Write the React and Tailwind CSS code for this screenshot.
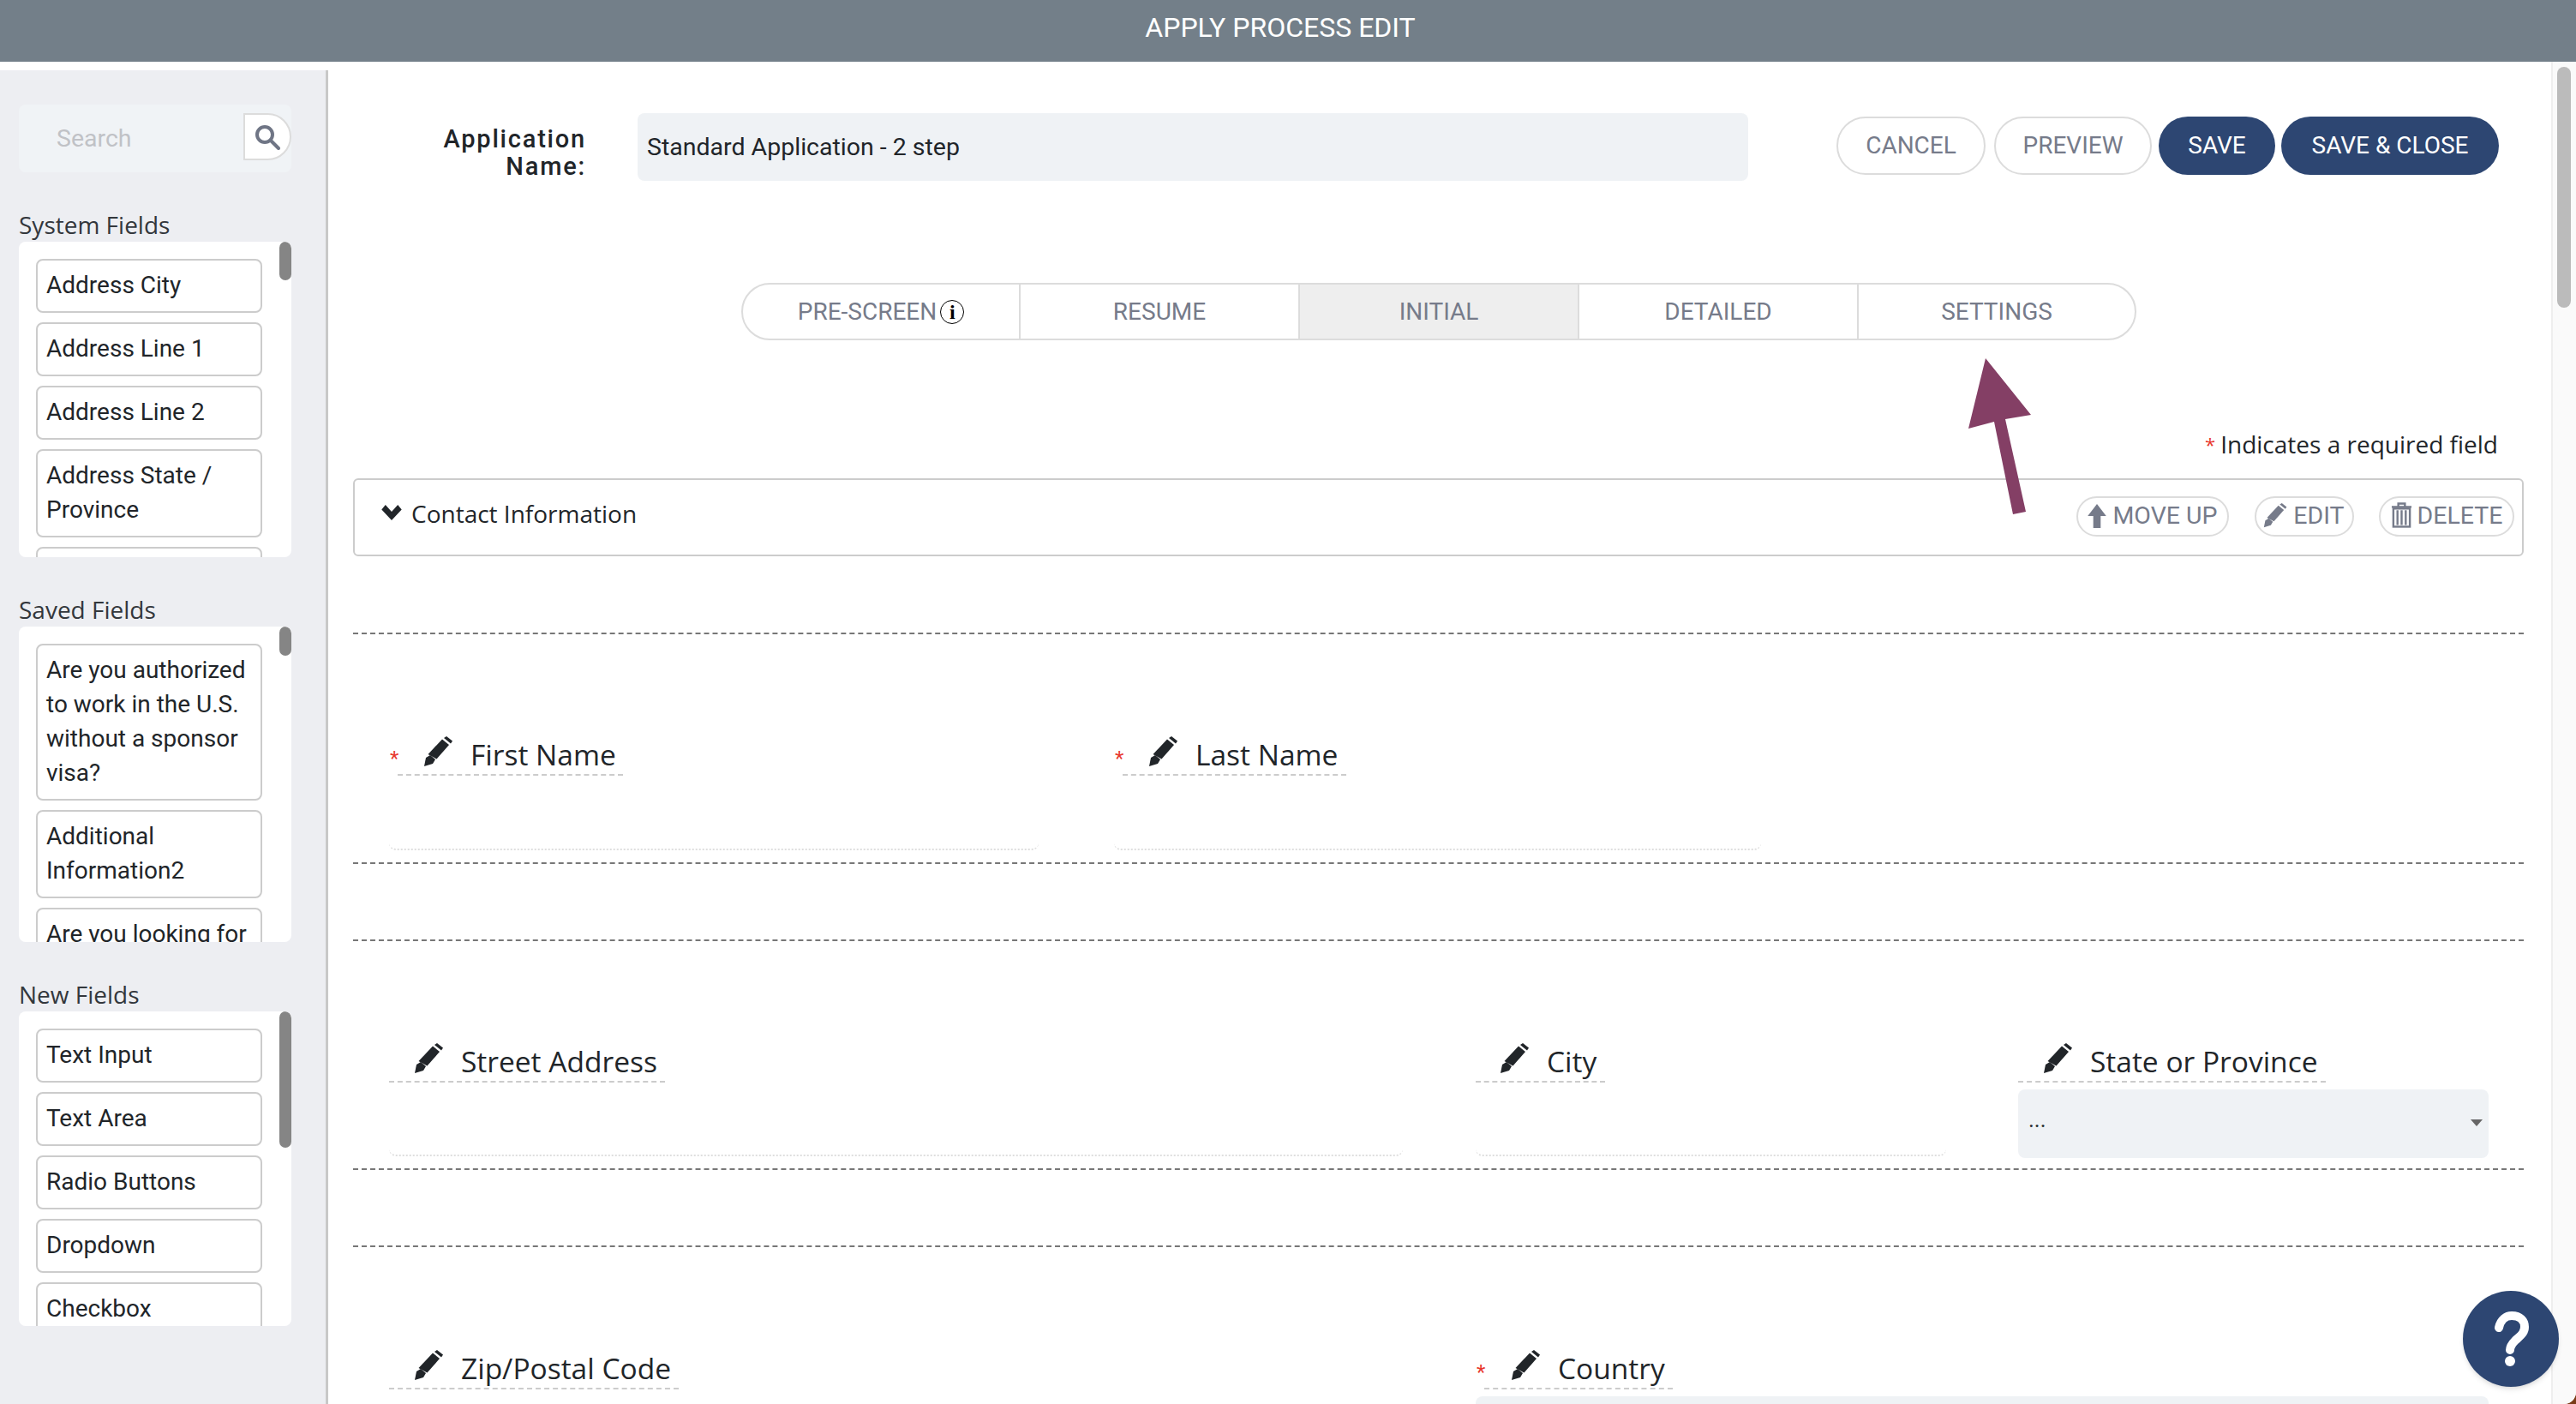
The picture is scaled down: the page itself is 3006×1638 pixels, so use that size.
const roboto = "font-['Roboto',sans-serif]"
const openSans = "font-['Open_Sans',sans-serif]"

function Pencil({ className, color = '#212529' }) {
  return (
    <svg viewBox="0 0 36 36" className={className} fill={color}>
      <path d="M1 35 L3 25 L8 22 L14 27 L11 32 Z" />
      <path d="M5.5 21 L22 3.5 L30 10 L15.5 26.5 Z" />
      <path d="M24 2 L27 0 L34 5.5 L32 8.5 Z" />
    </svg>
  )
}

function TabButton({ children, active, className = '', last }) {
  return (
    <div
      className={`flex items-center justify-center text-[28px] text-[#767b8a] ${
        active ? 'bg-[#eeeeee]' : ''
      } ${last ? '' : 'border-r-2 border-[#dcdcdc]'} ${className}`}
    >
      {children}
    </div>
  )
}

function SideList({ title, items, heightClass, thumbClass, gapClass }) {
  return (
    <div className="mt-[43px]">
      <div className={`${openSans} text-[28px] leading-[36px] pb-[2px] text-[#33373c]`}>{title}</div>
      <div className={`relative ${heightClass} w-[318px] bg-white rounded-lg overflow-hidden`}>
        <div className={`absolute right-0 top-0 w-[14px] rounded-lg bg-[#858585] ${thumbClass}`} />
        <div className={`flex flex-col ${gapClass} pl-[20px] pt-[20px]`}>
          {items.map((item, i) => (
            <div
              key={i}
              className={`${roboto} w-[264px] min-h-[63px] shrink-0 border-2 border-[#cccccc] rounded-lg px-[10px] pt-[9px] pb-[10px] text-[28px] leading-[40px] text-[#212529]`}
            >
              {item}
            </div>
          ))}
        </div>
      </div>
    </div>
  )
}

function FieldLabel({ label, required, pad, underlineWidth }) {
  return (
    <div className="flex items-start h-[57px]">
      {required && <span className="text-[#e8382f] text-[24px] leading-[24px] mt-[19px] w-[10px] ml-[1px] -mr-[1px]">*</span>}
      <div className={`flex items-end h-[51px] border-b-2 border-dashed border-[#cccccc] ${openSans} ${pad} ${underlineWidth}`}>
        <Pencil className="w-[36px] h-[36px] mb-[8px] shrink-0" />
        <span className="text-[33.5px] leading-[46px] text-[#212529] ml-[19px] whitespace-nowrap">{label}</span>
      </div>
    </div>
  )
}

function DottedInput({ className }) {
  return <div className={`h-[8px] border-b-2 border-dotted border-[#dedede] rounded-b-lg ${className}`} />
}

function PillAction({ icon, label, className }) {
  return (
    <div className={`flex items-center justify-center h-[47px] border-2 border-[#dcdcdc] rounded-[24px] text-[28.5px] text-[#767b8a] ${className}`}>
      {icon}
      <span>{label}</span>
    </div>
  )
}

export default function App() {
  return (
    <div className="w-[3006px] h-[1638px] bg-[#7a3b17]">
      <div className={`w-full h-full overflow-hidden rounded-br-[14px] flex flex-col bg-white ${roboto}`}>
        <div className="h-[72px] shrink-0 bg-[#737f89] flex items-center justify-center pr-[18px] pb-[9px] text-white text-[32px]">
          APPLY PROCESS EDIT
        </div>

        <div className="flex flex-1 min-h-0">
          {/* barra lateral */}
          <div className="w-[383px] mt-[10px] shrink-0 bg-[#edeef2] border-r-[3px] border-[#c8c8c8] pl-[22px] pt-[40px]">
            <div className="w-[318px] h-[79px] bg-[#f0f3f6] rounded-lg flex items-center">
              <span className="flex-1 pl-[44px] pt-[2px] text-[28.5px] text-[#c0c2c6]">Search</span>
              <div className="w-[56px] h-[55px] bg-white border-2 border-[#dcdcdc] rounded-r-[28px] flex items-center justify-center -mt-[4px]">
                <svg viewBox="0 0 30 30" className="w-[30px] h-[30px]" fill="none" stroke="#6f7585" strokeWidth="4">
                  <circle cx="12" cy="12" r="9" />
                  <path d="M19 19 L28 28" strokeLinecap="round" />
                </svg>
              </div>
            </div>
            <SideList
              title="System Fields"
              items={['Address City', 'Address Line 1', 'Address Line 2', 'Address State / Province', '']}
              heightClass="h-[368px]"
              thumbClass="h-[45px]"
              gapClass="gap-[11px]"
            />
            <SideList
              title="Saved Fields"
              items={['Are you authorized to work in the U.S. without a sponsor visa?', 'Additional Information2', 'Are you looking for']}
              heightClass="h-[368px]"
              thumbClass="h-[34px]"
              gapClass="gap-[11px]"
            />
            <SideList
              title="New Fields"
              items={['Text Input', 'Text Area', 'Radio Buttons', 'Dropdown', 'Checkbox']}
              heightClass="h-[367px]"
              thumbClass="h-[159px]"
              gapClass="gap-[11px]"
            />
          </div>

          {/* contenido */}
          <div className="relative flex-1 min-w-0 pl-[29px] pr-[61px]">
            <div className="flex items-start pt-[60px]">
              <div className="w-[272px] pl-[102px] text-right text-[29px] leading-[32px] font-medium tracking-[1.8px] text-[#212529] mt-[14px]">
                Application Name:
              </div>
              <div className="ml-[60px] w-[1296px] h-[79px] bg-[#eff2f5] rounded-lg flex items-center pl-[11px] pt-[2px] text-[28.5px] text-[#212529]">
                Standard Application - 2 step
              </div>
              <div className="flex ml-[103px] mt-[4px] text-[28px]">
                <div className="w-[174px] h-[68px] border-2 border-[#dcdcdc] rounded-[34px] flex items-center justify-center text-[#767b8a]">CANCEL</div>
                <div className="ml-[10px] w-[184px] h-[68px] border-2 border-[#dcdcdc] rounded-[34px] flex items-center justify-center text-[#767b8a]">PREVIEW</div>
                <div className="ml-[8px] w-[136px] h-[68px] bg-[#2d4672] rounded-[34px] flex items-center justify-center text-white">SAVE</div>
                <div className="ml-[7px] w-[254px] h-[68px] bg-[#2d4672] rounded-[34px] flex items-center justify-center text-white">SAVE &amp; CLOSE</div>
              </div>
            </div>

            <div className="flex w-[1628px] h-[67px] ml-[453px] mt-[119px] border-2 border-[#dcdcdc] rounded-[34px] overflow-hidden">
              <TabButton className="w-[324px]">
                PRE-SCREEN
                <span className="ml-[4px] w-[28px] h-[28px] rounded-full border border-black flex items-center justify-center text-black text-[24px] font-bold font-['Liberation_Serif',serif]">i</span>
              </TabButton>
              <TabButton className="w-[326px]">RESUME</TabButton>
              <TabButton className="w-[326px]" active>INITIAL</TabButton>
              <TabButton className="w-[326px]">DETAILED</TabButton>
              <TabButton className="flex-1" last>SETTINGS</TabButton>
            </div>

            <div className={`flex justify-end pr-[30px] mt-[102px] h-[38px] items-center text-[28px] text-[#212529] ${openSans}`}>
              <span className="text-[#e8382f] text-[22px] mr-[6px]">*</span>
              Indicates a required field
            </div>

            <div className="flex items-start mt-[21px] h-[91px] border-2 border-[#cccccc] rounded-md pl-[30px]">
              <svg viewBox="0 0 26 20" className="w-[26px] h-[18px] mt-[29px] shrink-0" fill="#212529">
                <path d="M0 6 L5 0 L13 9 L21 0 L26 6 L13 20 Z" />
              </svg>
              <span className={`${openSans} text-[28px] leading-[38px] text-[#212529] ml-[10px] mt-[20px]`}>Contact Information</span>
              <div className="ml-auto mr-[9px] mt-[19px] flex gap-[29.5px]">
                <PillAction
                  label="MOVE UP"
                  className="w-[178px]"
                  icon={
                    <svg viewBox="0 0 20 26" className="w-[22px] h-[28px] mr-[7px] -mt-[2px]" fill="#767b8a">
                      <path d="M10 0 L20 13 L14 13 L14 26 L6 26 L6 13 L0 13 Z" />
                    </svg>
                  }
                />
                <PillAction
                  label="EDIT"
                  className="w-[116px]"
                  icon={<Pencil className="w-[29px] h-[29px] mr-[6px] -mt-[2px]" color="#767b8a" />}
                />
                <PillAction
                  label="DELETE"
                  className="w-[158px]"
                  icon={
                    <svg viewBox="0 0 26 30" className="w-[25px] h-[30px] mr-[6px] -mt-[3px]" fill="none" stroke="#767b8a" strokeWidth="2.5">
                      <path d="M1 5 H25 M9 4 V1 H17 V4" />
                      <rect x="3" y="7" width="20" height="22" />
                      <path d="M8 9 V27 M13 9 V27 M18 9 V27" />
                    </svg>
                  }
                />
              </div>
            </div>

            {/* primera fila */}
            <div className="mt-[89px] h-[270px] border-y-2 border-dashed border-[#777777] pl-[42px] flex pt-[114px]">
              <div className="w-[846px]">
                <FieldLabel label="First Name" required pad="pl-[30px]" underlineWidth="w-[263px]" />
                <DottedInput className="mt-[73px] w-[758px]" />
              </div>
              <div className="w-[756px]">
                <FieldLabel label="Last Name" required pad="pl-[30px]" underlineWidth="w-[261px]" />
                <DottedInput className="mt-[73px] w-[755px]" />
              </div>
            </div>

            {/* segunda fila */}
            <div className="mt-[88px] h-[269px] border-y-2 border-dashed border-[#777777] pl-[42px] flex pt-[114px]">
              <div className="w-[1268px]">
                <FieldLabel label="Street Address" pad="pl-[29px]" underlineWidth="w-[322px]" />
                <DottedInput className="mt-[72px] w-[1183px]" />
              </div>
              <div className="w-[633px]">
                <FieldLabel label="City" pad="pl-[28px]" underlineWidth="w-[151px]" />
                <DottedInput className="mt-[72px] w-[549px]" />
              </div>
              <div className="w-[549px]">
                <FieldLabel label="State or Province" pad="pl-[29px]" underlineWidth="w-[359px]" />
                <div className="h-[80px] mt-[2px] bg-[#eff2f5] rounded-lg flex items-end justify-between pl-[12px] pr-[7px] pb-[25px] text-[26px] text-[#212529]">
                  <span>...</span>
                  <span className="w-0 h-0 mb-[12px] border-x-[7px] border-t-[8px] border-x-transparent border-t-[#666666]" />
                </div>
              </div>
            </div>

            {/* tercera fila */}
            <div className="mt-[88px] border-t-2 border-dashed border-[#777777] pl-[42px] flex pt-[115px]">
              <div className="w-[1268px]">
                <FieldLabel label="Zip/Postal Code" pad="pl-[29px]" underlineWidth="w-[338px]" />
              </div>
              <div className="w-[1182px]">
                <FieldLabel label="Country" required pad="pl-[31px]" underlineWidth="w-[220px]" />
                <div className="h-[60px] mt-[2px] bg-[#eff2f5] rounded-lg" />
              </div>
            </div>

            <svg className="absolute left-0 top-0 w-full h-full pointer-events-none" viewBox="383 72 2623 1566">
              <path d="M2317 418 L2370 484 L2340 489 L2364 597 L2349 600 L2327 492 L2297 500 Z" fill="#843f65" />
            </svg>

            {/* scrollbar */}
            <div className="absolute right-0 top-0 bottom-0 w-[29px] bg-[#fafafa] border-l-2 border-[#eeeeee]">
              <div className="ml-[5px] mt-[6px] w-[16px] h-[281px] rounded-lg bg-[#bbbbbb]" />
            </div>

            <div className="absolute left-[2491px] top-[1434px] w-[112px] h-[112px] rounded-full bg-[#2d4672] shadow-md">
              <svg viewBox="0 0 112 112" className="w-full h-full" fill="none" stroke="white">
                <path d="M42 43 C44 33 51 29 57 29 C67 29 72 35 72 42 C72 50 66 53 61 58 C57 62 55 65 55 69" strokeWidth="10" strokeLinecap="round" />
                <circle cx="55" cy="82" r="6" fill="white" strokeWidth="0" />
              </svg>
            </div>
          </div>
        </div>
      </div>
    </div>
  )
}
